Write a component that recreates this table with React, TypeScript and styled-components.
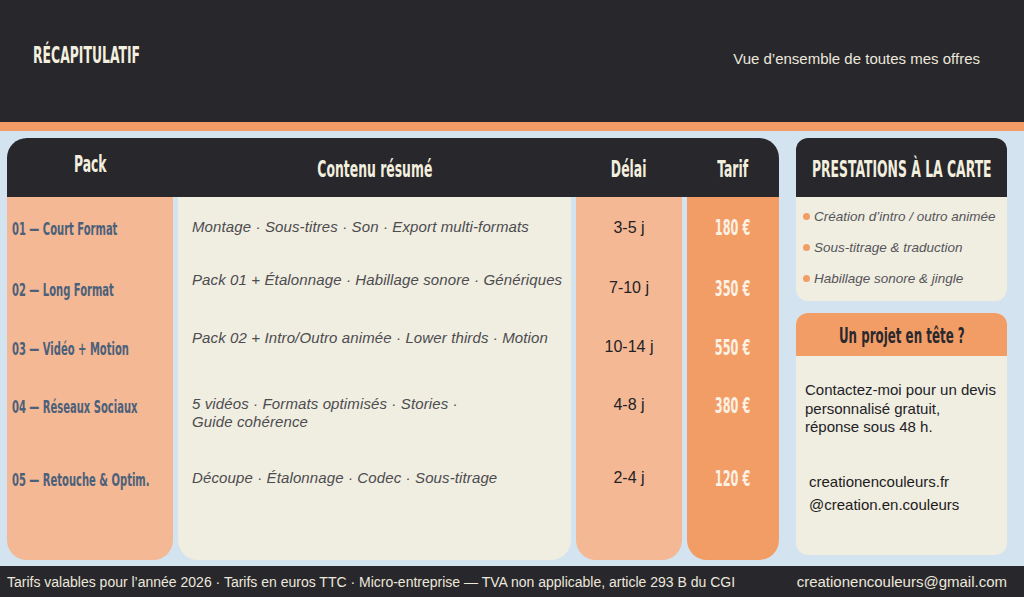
import React from 'react';
import styled, { createGlobalStyle } from 'styled-components';

const GlobalStyle = createGlobalStyle`
  html, body {
    margin: 0;
    padding: 0;
    background: #d3e3f0;
  }
  * {
    box-sizing: border-box;
  }
`;

// no narrow display face installed, so condensed bold squeezed horizontally
const display = `'DejaVu Sans Condensed', 'DejaVu Sans', sans-serif`;
const body = `'Liberation Sans', Arial, Helvetica, sans-serif`;

const Narrow = styled.span<{ $origin?: 'left' | 'center' }>`
  display: inline-block;
  white-space: nowrap;
  font-family: ${display};
  font-weight: 700;
  transform: scaleX(0.6);
  transform-origin: ${p => p.$origin || 'center'};
`;

const Page = styled.div`
  width: 1024px;
  height: 597px;
  display: flex;
  flex-direction: column;
  background: #d3e3f0;
  font-family: ${body};
  overflow: hidden;
`;

const Header = styled.header`
  height: 122px;
  background: #28272c;
  display: flex;
  align-items: center;
  justify-content: space-between;
  padding: 0 44px 6px 33px;
`;

const Title = styled.h1`
  margin: 0 0 6px;
  font-size: 23px;
  font-weight: 700;
  color: #f3efdf;
`;

const Subtitle = styled.p`
  margin: 0;
  font-size: 15px;
  color: #ece8dc;
`;

const Stripe = styled.div`
  height: 9px;
  background: #f39c65;
`;

const Main = styled.main`
  flex: 1;
  display: flex;
  gap: 17px;
  padding: 7px 17px 6px 7px;
`;

const Table = styled.section`
  width: 772px;
  display: flex;
  flex-direction: column;
`;

const columns = '166px 393px 106px 1fr';

const TableHead = styled.div`
  height: 59px;
  background: #28272c;
  border-radius: 20px 20px 0 0;
  display: grid;
  grid-template-columns: ${columns};
  column-gap: 5px;
`;

const HeadCell = styled.div<{ $raise?: boolean }>`
  display: flex;
  align-items: center;
  justify-content: center;
  padding-bottom: ${p => (p.$raise ? '8px' : '0')};
  padding-top: ${p => (p.$raise ? '0' : '2px')};
  font-size: 23px;
  color: #f3efdf;
`;

const TableBody = styled.div`
  flex: 1;
  display: grid;
  grid-template-columns: ${columns};
  grid-template-rows: 61px 60px 58px 58px 88px 1fr;
  column-gap: 5px;
`;

type Tone = 'peach' | 'cream' | 'orange';

const tones: Record<Tone, string> = {
  peach: '#f4b895',
  cream: '#f0ede1',
  orange: '#f39d66',
};

const Cell = styled.div<{ $tone: Tone; $last?: boolean }>`
  background: ${p => tones[p.$tone]};
  border-radius: ${p => (p.$last ? '0 0 20px 20px' : '0')};
  display: flex;
  align-items: center;
  min-width: 0;
`;

const PackCell = styled(Cell)`
  padding-left: 5px;
  padding-top: 2px;
  font-size: 18.5px;
  color: #4b6079;
`;

const ContentCell = styled(Cell)<{ $offset: number }>`
  padding-left: 14px;
  padding-top: ${p => Math.max(0, p.$offset * 2)}px;
  padding-bottom: ${p => Math.max(0, -p.$offset * 2)}px;
  font-size: 15px;
  font-style: italic;
  line-height: 18px;
  letter-spacing: 0.12px;
  color: #4c4c4f;
  white-space: nowrap;
`;

const DelayCell = styled(Cell)`
  justify-content: center;
  font-size: 16px;
  color: #222226;
`;

const PriceCell = styled(Cell)`
  justify-content: center;
  padding-top: 1px;
  font-size: 21px;
  color: #fbf1e4;
`;

const Side = styled.aside`
  width: 211px;
  display: flex;
  flex-direction: column;
  gap: 12px;
`;

const Card = styled.div`
  display: flex;
  flex-direction: column;
  border-radius: 12px;
  overflow: hidden;
  background: #f0ede1;
`;

const CardHead = styled.div<{ $accent?: boolean }>`
  height: ${p => (p.$accent ? '43px' : '59px')};
  background: ${p => (p.$accent ? '#f39d66' : '#28272c')};
  color: ${p => (p.$accent ? '#2a292e' : '#f3efdf')};
  display: flex;
  align-items: center;
  justify-content: center;
  padding-top: 2px;
  font-size: ${p => (p.$accent ? '22px' : '23px')};
`;

const ExtraList = styled.ul`
  list-style: none;
  margin: 0;
  padding: 4px 0 7px 7px;
  display: flex;
  flex-direction: column;
`;

const ExtraItem = styled.li`
  height: 31px;
  display: flex;
  align-items: center;
  gap: 4px;
  font-size: 13.5px;
  font-style: italic;
  color: #55555a;
  white-space: nowrap;

  &::before {
    content: '';
    width: 7px;
    height: 7px;
    border-radius: 50%;
    background: #f39d66;
    flex: none;
  }
`;

const ContactBody = styled.div`
  height: 199px;
  display: flex;
  flex-direction: column;
  padding: 25px 9px 0;
`;

const ContactText = styled.p`
  margin: 0;
  font-size: 15px;
  line-height: 18.5px;
  color: #222226;
`;

const Links = styled.div`
  margin-top: 36px;
  padding-left: 4px;
  display: flex;
  flex-direction: column;
  gap: 5px;
  font-size: 15px;
  line-height: 18px;
  color: #1c1c20;
`;

const Footer = styled.footer`
  height: 31px;
  background: #28272c;
  display: flex;
  align-items: center;
  justify-content: space-between;
  padding: 0 17px 0 7px;
  color: #ece8dc;
`;

const FooterNote = styled.span`
  font-size: 14px;
`;

const FooterMail = styled.span`
  font-size: 15px;
`;

interface Offer {
  pack: string;
  content: React.ReactNode;
  offset: number;
  delay: string;
  price: string;
}

const offers: Offer[] = [
  { pack: '01 — Court Format', content: 'Montage · Sous-titres · Son · Export multi-formats', offset: -1, delay: '3-5 j', price: '180 €' },
  { pack: '02 — Long Format', content: 'Pack 01 + Étalonnage · Habillage sonore · Génériques', offset: -8, delay: '7-10 j', price: '350 €' },
  { pack: '03 — Vidéo + Motion', content: 'Pack 02 + Intro/Outro animée · Lower thirds · Motion', offset: -9, delay: '10-14 j', price: '550 €' },
  {
    pack: '04 — Réseaux Sociaux',
    content: (
      <>
        5 vidéos · Formats optimisés · Stories ·<br />
        Guide cohérence
      </>
    ),
    offset: 8,
    delay: '4-8 j',
    price: '380 €',
  },
  { pack: '05 — Retouche & Optim.', content: 'Découpe · Étalonnage · Codec · Sous-titrage', offset: 0, delay: '2-4 j', price: '120 €' },
];

const extras = ['Création d’intro / outro animée', 'Sous-titrage & traduction', 'Habillage sonore & jingle'];

export default function App() {
  return (
    <Page>
      <GlobalStyle />
      <Header>
        <Title>
          <Narrow $origin="left">RÉCAPITULATIF</Narrow>
        </Title>
        <Subtitle>Vue d’ensemble de toutes mes offres</Subtitle>
      </Header>
      <Stripe />
      <Main>
        <Table>
          <TableHead>
            <HeadCell $raise><Narrow>Pack</Narrow></HeadCell>
            <HeadCell><Narrow>Contenu résumé</Narrow></HeadCell>
            <HeadCell><Narrow>Délai</Narrow></HeadCell>
            <HeadCell><Narrow>Tarif</Narrow></HeadCell>
          </TableHead>
          <TableBody>
            {offers.map(o => (
              <React.Fragment key={o.pack}>
                <PackCell $tone="peach">
                  <Narrow $origin="left">{o.pack}</Narrow>
                </PackCell>
                <ContentCell $tone="cream" $offset={o.offset}>
                  <span>{o.content}</span>
                </ContentCell>
                <DelayCell $tone="peach">{o.delay}</DelayCell>
                <PriceCell $tone="orange">
                  <Narrow>{o.price}</Narrow>
                </PriceCell>
              </React.Fragment>
            ))}
            <Cell $tone="peach" $last />
            <Cell $tone="cream" $last />
            <Cell $tone="peach" $last />
            <Cell $tone="orange" $last />
          </TableBody>
        </Table>
        <Side>
          <Card>
            <CardHead><Narrow>PRESTATIONS À LA CARTE</Narrow></CardHead>
            <ExtraList>
              {extras.map(e => (
                <ExtraItem key={e}>{e}</ExtraItem>
              ))}
            </ExtraList>
          </Card>
          <Card>
            <CardHead $accent><Narrow>Un projet en tête ?</Narrow></CardHead>
            <ContactBody>
              <ContactText>
                Contactez-moi pour un devis
                <br />
                personnalisé gratuit,
                <br />
                réponse sous 48 h.
              </ContactText>
              <Links>
                <span>creationencouleurs.fr</span>
                <span>@creation.en.couleurs</span>
              </Links>
            </ContactBody>
          </Card>
        </Side>
      </Main>
      <Footer>
        <FooterNote>Tarifs valables pour l’année 2026 · Tarifs en euros TTC · Micro-entreprise — TVA non applicable, article 293 B du CGI</FooterNote>
        <FooterMail>creationencouleurs@gmail.com</FooterMail>
      </Footer>
    </Page>
  );
}
